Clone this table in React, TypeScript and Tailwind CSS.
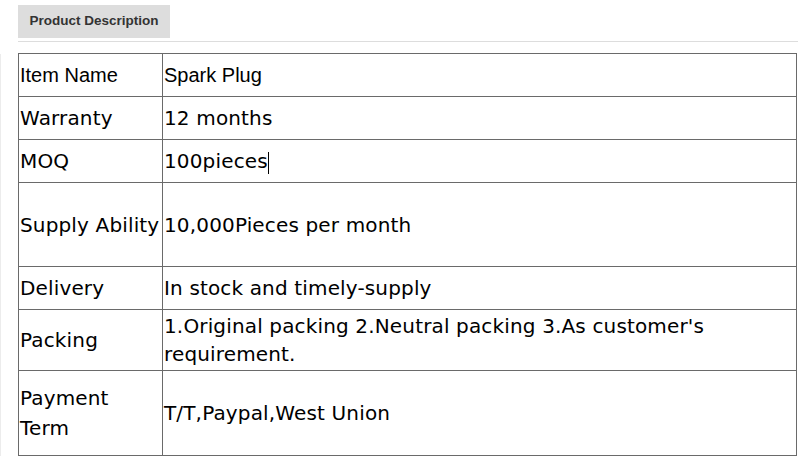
import React from "react";

const verdana = "font-['DejaVu_Sans','Verdana',sans-serif] tracking-[0.15px]";
const arial = "font-['Liberation_Sans','Arial',sans-serif]";

export default function App() {
  const td1 = "border border-[#6a6a6a] px-[1px] py-0 align-middle text-left";
  return (
    <div className="w-[798px] h-[459px] bg-white overflow-hidden text-black">
      <div className="pl-[18px] pt-[5px]">
        <div
          className={`w-[152px] h-[33px] bg-[#dddddd] flex items-center justify-center text-[13.5px] font-bold text-[#333333] ${arial}`}
        >
          Product Description
        </div>
      </div>
      <div className="ml-[18px] mt-[3px] h-px bg-[#dddddd]" />
      <div className="flex">
        <div className="w-[2px] mt-[12px] border-l border-[#ececec]" />
        <div className="pl-[16px] pt-[11px]">
          <table className="border-collapse table-fixed w-[779px] border border-[#6a6a6a] text-[20px]">
            <colgroup>
              <col className="w-[144px]" />
              <col />
            </colgroup>
            <tbody>
              <tr className="h-[43px]">
                <td className={`${td1} ${arial}`}>Item Name</td>
                <td className={`${td1} ${arial}`}>Spark Plug</td>
              </tr>
              <tr className="h-[43px]">
                <td className={`${td1} ${verdana}`}>Warranty</td>
                <td className={`${td1} ${verdana}`}>12 months</td>
              </tr>
              <tr className="h-[43px]">
                <td className={`${td1} ${verdana}`}>MOQ</td>
                <td className={`${td1} ${verdana}`}>
                  100pieces
                  <span className="inline-block w-px h-[22px] bg-black align-middle" />
                </td>
              </tr>
              <tr className="h-[84px]">
                <td className={`${td1} ${verdana}`}>Supply Ability</td>
                <td className={`${td1} ${verdana}`}>10,000Pieces per month</td>
              </tr>
              <tr className="h-[43px]">
                <td className={`${td1} ${verdana}`}>Delivery</td>
                <td className={`${td1} ${verdana}`}>In stock and timely-supply</td>
              </tr>
              <tr className="h-[61px]">
                <td className={`${td1} ${verdana}`}>Packing</td>
                <td className={`${td1} ${verdana} leading-[28px]`}>
                  1.Original packing 2.Neutral packing 3.As customer's requirement.
                </td>
              </tr>
              <tr className="h-[85px]">
                <td className={`${td1} ${verdana} leading-[30px]`}>
                  Payment
                  <br />
                  Term
                </td>
                <td className={`${td1} ${verdana}`}>T/T,Paypal,West Union</td>
              </tr>
            </tbody>
          </table>
        </div>
      </div>
    </div>
  );
}
